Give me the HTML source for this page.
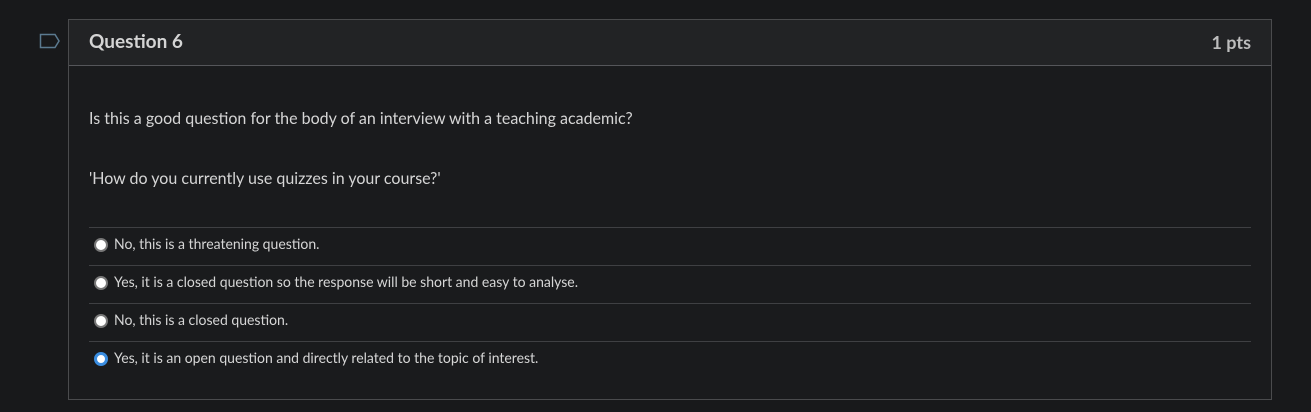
<!DOCTYPE html>
<html><head><style>
body{margin:0;width:1311px;height:412px;background:#18191b;font-family:"Lato","Liberation Sans",sans-serif;color:#d6d6d6;overflow:hidden;position:relative}
.flag{position:absolute;left:39px;top:33px}
.panel{position:absolute;left:68px;top:19px;width:1202px;height:379px;border:1px solid #4a4b4d;background:#1a1b1d}
.hdr{height:45px;background:#222325;border-bottom:1px solid #55565a;position:relative}
.hdr .t{position:absolute;left:20px;top:10px;font-size:19px;font-weight:bold;color:#d4d4d4}
.hdr .p{position:absolute;right:20px;top:11px;font-size:18px;font-weight:bold;color:#bdbdbd}
.q{position:absolute;left:20px;font-size:16px;color:#d6d6d6}
.ans{position:absolute;left:20px;top:207px;width:1162px}
.row{height:37px;border-top:1px solid #3f4043;position:relative;font-size:14px;color:#d6d6d6}
.row span{position:absolute;left:25px;top:7px}
.r{position:absolute;left:5px;top:10px;width:10px;height:10px;border-radius:50%;background:#fff;border:2px solid #777}
.r.on{background:#fff;border:3px solid #3a8de0;width:8px;height:8px}
</style></head><body>
<svg class="flag" width="22" height="16" viewBox="0 0 22 16"><path d="M1.5 1.5H16L20 8L16 14.5H1.5Z" fill="none" stroke="#5b7a90" stroke-width="1.5"/></svg>
<div class="panel">
<div class="hdr"><div class="t">Question 6</div><div class="p">1 pts</div></div>
<div class="q" style="top:89px">Is this a good question for the body of an interview with a teaching academic?</div>
<div class="q" style="top:149px">'How do you currently use quizzes in your course?'</div>
<div class="ans">
<div class="row"><div class="r"></div><span>No, this is a threatening question.</span></div>
<div class="row"><div class="r"></div><span>Yes, it is a closed question so the response will be short and easy to analyse.</span></div>
<div class="row"><div class="r"></div><span>No, this is a closed question.</span></div>
<div class="row"><div class="r on"></div><span>Yes, it is an open question and directly related to the topic of interest.</span></div>
</div>
</div>
</body></html>
